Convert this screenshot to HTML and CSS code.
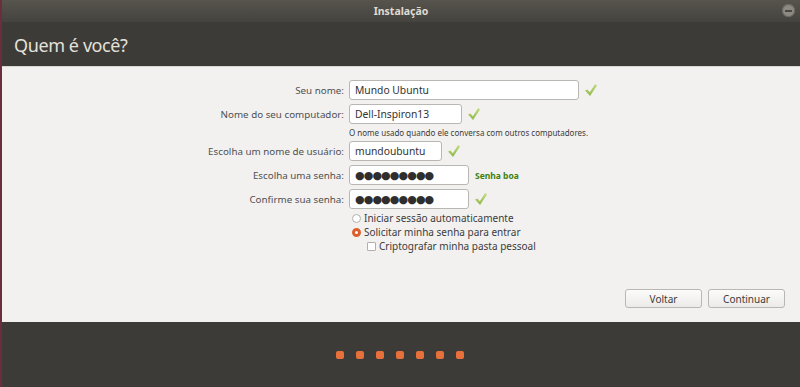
FILE: index.html
```html
<!DOCTYPE html>
<html lang="pt-BR">
<head>
<meta charset="utf-8">
<title>Instalação</title>
<link rel="stylesheet" href="styles.css">
</head>
<body>
<div class="window">
  <div class="titlebar">
    <span class="title">Instalação</span>
    <span class="minimize"><span class="bar"></span></span>
  </div>
  <div class="header">Quem é você?</div>
  <div class="content">
    <div class="form">
      <label class="lbl">Seu nome:</label>
      <div class="field"><div class="input w-name">Mundo Ubuntu</div><span class="check"></span></div>

      <label class="lbl">Nome do seu computador:</label>
      <div class="field"><div class="input w-comp">Dell-Inspiron13</div><span class="check"></span></div>

      <span></span>
      <div class="hint">O nome usado quando ele conversa com outros computadores.</div>

      <label class="lbl">Escolha um nome de usuário:</label>
      <div class="field"><div class="input w-user">mundoubuntu</div><span class="check"></span></div>

      <label class="lbl">Escolha uma senha:</label>
      <div class="field"><div class="input w-pass dots">●●●●●●●●●</div><span class="strength">Senha boa</span></div>

      <label class="lbl">Confirme sua senha:</label>
      <div class="field"><div class="input w-pass dots">●●●●●●●●●</div><span class="check"></span></div>

      <span></span>
      <div class="options">
        <div class="opt"><span class="radio"></span>Iniciar sessão automaticamente</div>
        <div class="opt"><span class="radio on"></span>Solicitar minha senha para entrar</div>
        <div class="opt sub"><span class="box"></span>Criptografar minha pasta pessoal</div>
      </div>
    </div>
    <div class="buttons">
      <button class="btn">Voltar</button>
      <button class="btn">Continuar</button>
    </div>
  </div>
  <div class="footer">
    <span class="dot"></span><span class="dot"></span><span class="dot"></span><span class="dot"></span><span class="dot"></span><span class="dot"></span><span class="dot"></span>
  </div>
</div>
</body>
</html>
```
FILE: styles.css
```css
html, body {
  margin: 0;
  padding: 0;
  background: #3c3b37;
}
body {
  font-family: "Noto Sans", "Open Sans", sans-serif;
  width: 800px;
  height: 387px;
  overflow: hidden;
}
.window {
  height: 387px;
  display: flex;
  flex-direction: column;
  border-left: 2px solid #6b2e3c;
  box-sizing: border-box;
}
.titlebar {
  height: 22px;
  background: linear-gradient(#57544e, #45433e);
  display: flex;
  align-items: center;
  justify-content: center;
  position: relative;
}
.title {
  color: #dfdbd2;
  font-size: 10.5px;
  font-weight: bold;
}
.minimize {
  position: absolute;
  right: 5px;
  top: 4px;
  width: 13px;
  height: 13px;
  border-radius: 50%;
  background: #8d8a83;
  box-shadow: inset 0 0 0 1px #6a6761;
  display: flex;
  align-items: center;
  justify-content: center;
}
.minimize .bar {
  width: 7px;
  height: 2px;
  background: #4a4843;
}
.header {
  height: 44px;
  background: #3c3b37;
  color: #e4e1da;
  font-size: 18px;
  letter-spacing: -0.4px;
  padding-left: 12px;
  display: flex;
  align-items: center;
  box-sizing: border-box;
  padding-top: 2px;
}
.content {
  height: 256px;
  background: #f2f1f0;
  border-top: 1px solid #d9d7d3;
  box-sizing: border-box;
  display: flex;
  flex-direction: column;
  padding-top: 13px;
}
.form {
  display: grid;
  grid-template-columns: 342px auto;
  column-gap: 5px;
  row-gap: 4px;
  align-items: center;
  font-size: 9.8px;
  color: #3c3c3c;
}
.lbl {
  text-align: right;
  color: #505050;
}
.field {
  display: flex;
  align-items: center;
  gap: 6px;
}
.input {
  height: 20px;
  box-sizing: border-box;
  border: 1px solid #b9b7b3;
  border-radius: 3px;
  background: #ffffff;
  padding: 0 5px;
  display: flex;
  align-items: center;
  font-size: 10.3px;
  color: #333;
}
.w-name { width: 230px; }
.w-comp { width: 113px; }
.w-user { width: 93px; }
.w-pass { width: 120px; }
.dots {
  font-family: "DejaVu Sans", sans-serif;
  font-size: 11px;
  letter-spacing: -0.9px;
  color: #2e2e2e;
}
.check {
  width: 12px;
  height: 12px;
  background: linear-gradient(#c2dc80, #8fb84c);
  clip-path: polygon(0% 55%, 20% 45%, 40% 68%, 85% 0%, 100% 12%, 42% 100%);
}
.strength {
  color: #3f7f0f;
  font-weight: bold;
  font-size: 8.5px;
}
.hint {
  font-size: 8px;
  line-height: 9px;
  color: #3c3c3c;
}
.options {
  display: flex;
  flex-direction: column;
  margin-top: -2px;
  font-size: 10px;
  color: #3c3c3c;
}
.opt {
  height: 14px;
  display: flex;
  align-items: center;
  gap: 3px;
  padding-left: 3px;
}
.opt.sub {
  padding-left: 18px;
}
.radio {
  width: 9px;
  height: 9px;
  border-radius: 50%;
  border: 1px solid #b2b0ac;
  background: #ffffff;
  box-sizing: border-box;
}
.radio.on {
  border: 3px solid #dd5f2d;
  background: #ffffff;
}
.box {
  width: 9px;
  height: 9px;
  border: 1px solid #b2b0ac;
  background: #ffffff;
  box-sizing: border-box;
  border-radius: 1px;
}
.buttons {
  margin-top: auto;
  margin-bottom: 14px;
  display: flex;
  justify-content: flex-end;
  gap: 6px;
  padding-right: 15px;
}
.btn {
  width: 77px;
  height: 19px;
  font-family: inherit;
  font-size: 10px;
  color: #3c3c3c;
  border: 1px solid #b9b7b3;
  border-radius: 3px;
  background: linear-gradient(#fbfbfa, #ecebe9);
  padding: 0;
}
.footer {
  flex: 1;
  background: #3c3b37;
  display: flex;
  justify-content: center;
  align-items: center;
  gap: 12px;
  padding-right: 2px;
}
.dot {
  width: 8px;
  height: 8px;
  border-radius: 2px;
  background: #e8703a;
}
```
